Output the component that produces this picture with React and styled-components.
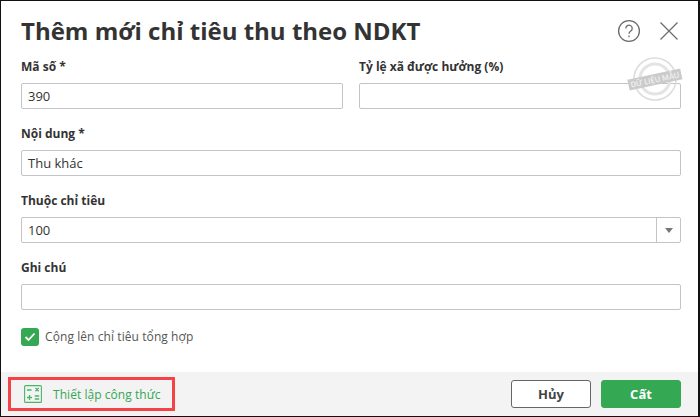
import React from 'react';
import styled, { createGlobalStyle } from 'styled-components';

const Global = createGlobalStyle`
  html, body { margin: 0; padding: 0; background: #000; }
  * { box-sizing: border-box; }
  body { font-family: "Open Sans", "Noto Sans", sans-serif; }
`;

const Dialog = styled.div`
  position: relative;
  width: 700px;
  height: 417px;
  background: #fff;
  border: solid #111;
  border-width: 1px 2px 1px 1px;
  display: flex;
  flex-direction: column;
  overflow: hidden;
`;

const Header = styled.header`
  height: 57px;
  padding: 13px 19px 0 20px;
  display: flex;
  align-items: flex-start;
  justify-content: space-between;
`;

const Title = styled.h1`
  margin: 0;
  font-size: 24px;
  line-height: 33px;
  font-weight: 700;
  color: #333;
`;

const HeaderIcons = styled.div`
  display: flex;
  align-items: center;
  gap: 18px;
  padding-top: 5px;
  color: #666;
`;

const Body = styled.div`
  flex: 1;
  padding: 0 17px 0 20px;
  display: flex;
  flex-direction: column;
  gap: 16px;
`;

const TwoCols = styled.div`
  display: grid;
  grid-template-columns: 322px 322px;
  column-gap: 16px;
`;

const Field = styled.div`
  display: flex;
  flex-direction: column;
  gap: 8px;
`;

const Label = styled.label`
  font-size: 12px;
  line-height: 18px;
  font-weight: 700;
  color: #333;
  height: 17px;
`;

const Input = styled.div`
  height: 26px;
  border: 1px solid #c3c3cb;
  border-radius: 2px;
  padding: 0 6px;
  font-size: 13px;
  line-height: 25px;
  color: #333;
  background: #fff;
`;

const SelectBox = styled(Input)`
  display: flex;
  justify-content: space-between;
  padding-right: 0;
`;

const SelectArrow = styled.span`
  width: 24px;
  border-left: 1px solid #c3c3cb;
  display: flex;
  align-items: center;
  justify-content: center;
  &::after {
    content: '';
    border-style: solid;
    border-width: 5px 4px 0 4px;
    border-color: #777 transparent transparent transparent;
  }
`;

const CheckRow = styled.div`
  display: flex;
  align-items: center;
  gap: 6px;
  margin-top: 2px;
  font-size: 12px;
  letter-spacing: 0.08px;
  line-height: 18px;
  color: #555;
`;

const CheckBox = styled.span`
  width: 18px;
  height: 18px;
  border-radius: 3px;
  background: #34a853;
  display: flex;
  align-items: center;
  justify-content: center;
`;

const Footer = styled.footer`
  height: 44px;
  background: #f3f3f3;
  padding: 0 17px 0 7px;
  display: flex;
  align-items: center;
  justify-content: space-between;
`;

const FormulaLink = styled.div`
  width: 167px;
  height: 34px;
  border: 3px solid #f44347;
  display: flex;
  align-items: center;
  gap: 11px;
  padding-left: 13px;
  font-size: 12px;
  letter-spacing: 0.05px;
  color: #34a853;
`;

const Actions = styled.div`
  display: flex;
  gap: 10px;
`;

const Button = styled.button`
  width: 80px;
  height: 28px;
  border-radius: 3px;
  font-family: inherit;
  font-size: 13px;
  font-weight: 700;
  padding: 0;
  border: 1px solid ${p => (p.$primary ? '#34a853' : '#666')};
  background: ${p => (p.$primary ? '#34a853' : '#fff')};
  color: ${p => (p.$primary ? '#fff' : '#444')};
`;

const Stamp = styled.svg`
  position: absolute;
  left: 627px;
  top: 55px;
  overflow: visible;
`;

export default function App() {
  return (
    <>
      <Global />
      <Dialog>
        <Header>
          <Title>Thêm mới chỉ tiêu thu theo NDKT</Title>
          <HeaderIcons>
            <svg width="24" height="24" viewBox="0 0 24 24" fill="none" stroke="#6b6b6b" strokeWidth="1.3">
              <circle cx="12" cy="12" r="10.4" />
              <path d="M8.8 9.4a3.2 3.2 0 1 1 5 2.6c-1.2.8-1.8 1.4-1.8 2.8" />
              <path d="M12 16.6v1.6" />
            </svg>
            <svg width="20" height="20" viewBox="0 0 20 20" fill="none" stroke="#6b6b6b" strokeWidth="1.2">
              <path d="M1.5 1.5l17 17M18.5 1.5l-17 17" />
            </svg>
          </HeaderIcons>
        </Header>
        <Body>
          <TwoCols>
            <Field>
              <Label>Mã số *</Label>
              <Input>390</Input>
            </Field>
            <Field>
              <Label>Tỷ lệ xã được hưởng (%)</Label>
              <Input />
            </Field>
          </TwoCols>
          <Field>
            <Label>Nội dung *</Label>
            <Input>Thu khác</Input>
          </Field>
          <Field>
            <Label>Thuộc chỉ tiêu</Label>
            <SelectBox>
              100
              <SelectArrow />
            </SelectBox>
          </Field>
          <Field>
            <Label>Ghi chú</Label>
            <Input />
          </Field>
          <CheckRow>
            <CheckBox>
              <svg width="12" height="10" viewBox="0 0 12 10" fill="none" stroke="#fff" strokeWidth="1.8">
                <path d="M1.5 5l3 3 6-6.5" />
              </svg>
            </CheckBox>
            Cộng lên chỉ tiêu tổng hợp
          </CheckRow>
        </Body>
        <Footer>
          <FormulaLink>
            <svg width="18" height="18" viewBox="0 0 18 18" fill="none" stroke="#4cb569" strokeWidth="1.1">
              <rect x="0.6" y="0.6" width="16.8" height="16.8" rx="1" />
              <path d="M3 5h4.5M11.5 3l3.2 3.2M14.7 3l-3.2 3.2M3 12.5h5M5.5 10v5M10.8 11h4.4M10.8 14h4.4" strokeWidth="1.3" />
            </svg>
            Thiết lập công thức
          </FormulaLink>
          <Actions>
            <Button>Hủy</Button>
            <Button $primary>Cất</Button>
          </Actions>
        </Footer>
        <Stamp width="56" height="48" viewBox="0 0 56 48" fill="none">
          <circle cx="27" cy="23" r="21" stroke="#dcdcdc" strokeWidth="1.5" />
          <circle cx="27" cy="23" r="15" stroke="#e4e4e4" strokeWidth="3" />
          <g transform="rotate(-12 27 24)">
            <rect x="0" y="18" width="54" height="11" fill="#cbcbcb" />
            <text x="27" y="26.5" textAnchor="middle" fontSize="7.6" fontWeight="600" fill="#f2f2f2" fontFamily="Open Sans">DỮ LIỆU MẪU</text>
          </g>
        </Stamp>
      </Dialog>
    </>
  );
}
